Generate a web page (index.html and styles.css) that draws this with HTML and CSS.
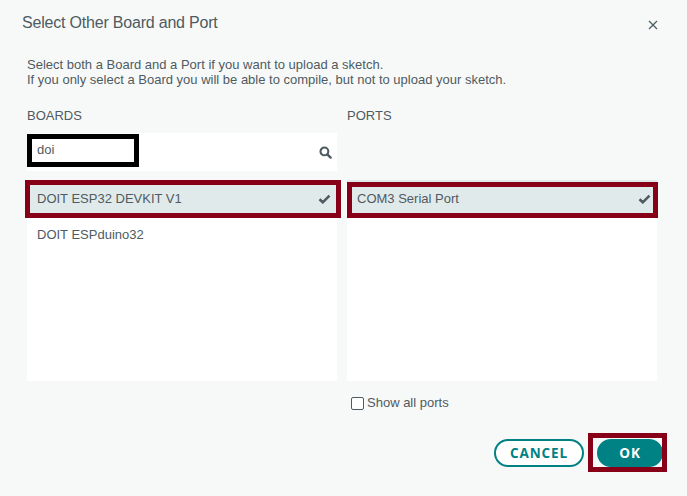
FILE: index.html
```html
<!DOCTYPE html>
<html>
<head>
<meta charset="utf-8">
<link rel="stylesheet" href="styles.css">
</head>
<body>
<div class="dialog">
  <header class="head">
    <h1 class="title">Select Other Board and Port</h1>
    <span class="close">
      <svg width="10" height="10" viewBox="0 0 10 10"><path d="M1 1L9 9M9 1L1 9" stroke="#4e5b61" stroke-width="1.3" fill="none"/></svg>
    </span>
  </header>
  <p class="desc">Select both a Board and a Port if you want to upload a sketch.<br>If you only select a Board you will be able to compile, but not to upload your sketch.</p>
  <div class="grid">
    <div class="label">BOARDS</div>
    <div class="label">PORTS</div>
    <div class="search">
      <span class="query">doi</span>
      <svg class="search-icon" width="13" height="13" viewBox="0 0 13 13"><circle cx="5.4" cy="5.4" r="3.9" stroke="#4e5b61" stroke-width="2.1" fill="none"/><path d="M8.3 8.3L11.6 11.6" stroke="#4e5b61" stroke-width="2.4" stroke-linecap="round"/></svg>
    </div>
    <div class="search-empty"></div>
    <ul class="list">
      <li class="item selected marked-boards">DOIT ESP32 DEVKIT V1<svg class="check" width="13" height="10" viewBox="0 0 13 10"><path d="M1.5 5.2L4.8 8.3L11.5 1.6" stroke="#4e5b61" stroke-width="2.6" fill="none"/></svg></li>
      <li class="item">DOIT ESPduino32</li>
    </ul>
    <ul class="list">
      <li class="item selected marked-ports">COM3 Serial Port<svg class="check" width="13" height="10" viewBox="0 0 13 10"><path d="M1.5 5.2L4.8 8.3L11.5 1.6" stroke="#4e5b61" stroke-width="2.6" fill="none"/></svg></li>
    </ul>
    <div></div>
    <label class="show"><span class="box"></span>Show all ports</label>
  </div>
  <div class="actions">
    <button class="btn cancel">CANCEL</button>
    <button class="btn ok">OK</button>
  </div>
</div>
</body>
</html>
```
FILE: styles.css
```css
html, body {
  margin: 0;
  padding: 0;
  background: #f7f9f9;
}
body {
  font-family: "Liberation Sans", Arial, sans-serif;
  color: #4e5b61;
  width: 687px;
  height: 496px;
  overflow: hidden;
}
.dialog {
  padding: 0 30px 0 27px;
}
.head {
  display: flex;
  justify-content: space-between;
  align-items: center;
  padding-top: 13px;
  height: 20px;
  margin-left: -5px;
}
.title {
  margin: 0;
  font-size: 16px;
  font-weight: normal;
  line-height: 20px;
  letter-spacing: -0.2px;
}
.close {
  display: flex;
  margin-right: -1px;
  margin-top: 3px;
}
.desc {
  margin: 24px 0 0;
  font-size: 13px;
  line-height: 15px;
}
.grid {
  display: grid;
  grid-template-columns: 310px 310px;
  column-gap: 10px;
  margin-top: 21px;
}
.label {
  font-size: 13px;
  line-height: 16px;
  margin-bottom: 9px;
}
.search {
  background: #fff;
  height: 38px;
  display: flex;
  align-items: flex-start;
  justify-content: space-between;
  margin-bottom: 9px;
}
.query {
  box-sizing: border-box;
  width: 112px;
  height: 33px;
  margin-top: 1px;
  border: 5px solid #000;
  padding-left: 5px;
  font-size: 13px;
  line-height: 22px;
}
.search-icon {
  margin: 13px 5px 0 0;
}
.list {
  list-style: none;
  margin: 0;
  padding: 0;
  background: #fff;
  height: 201px;
}
.item {
  position: relative;
  height: 36px;
  display: flex;
  align-items: center;
  justify-content: space-between;
  padding: 0 6px 0 10px;
  font-size: 13px;
}
.item.selected {
  background: #e1eaeb;
}
.check {
  margin-top: 1px;
}
.marked-boards::after,
.marked-ports::after {
  content: "";
  position: absolute;
  border: 5px solid #880018;
  pointer-events: none;
}
.marked-boards::after {
  left: -2px;
  right: -4px;
  top: 0;
  bottom: -2px;
}
.marked-ports::after {
  left: 0;
  right: -1px;
  top: 2px;
  bottom: -2px;
}
.show {
  display: flex;
  align-items: center;
  margin-top: 14px;
  padding-left: 4px;
  font-size: 13px;
  line-height: 16px;
}
.box {
  box-sizing: border-box;
  width: 13px;
  height: 13px;
  border: 1px solid #4e5b61;
  border-radius: 2px;
  background: #fff;
  margin-right: 3px;
}
.actions {
  display: flex;
  justify-content: flex-end;
  gap: 13px;
  margin-top: 28px;
  margin-right: -6px;
}
.btn {
  box-sizing: border-box;
  height: 28px;
  border-radius: 14px;
  font-family: "Open Sans", sans-serif;
  font-weight: 700;
  font-size: 13.5px;
  letter-spacing: 0.9px;
  border: 2px solid #008184;
  padding: 0;
}
.cancel {
  width: 90px;
  background: #fff;
  color: #008184;
}
.ok {
  position: relative;
  width: 66px;
  background: #008184;
  color: #fff;
}
.ok::after {
  content: "";
  position: absolute;
  left: -11px;
  right: -6px;
  top: -8px;
  bottom: -7px;
  border: 5px solid #880018;
}
```
